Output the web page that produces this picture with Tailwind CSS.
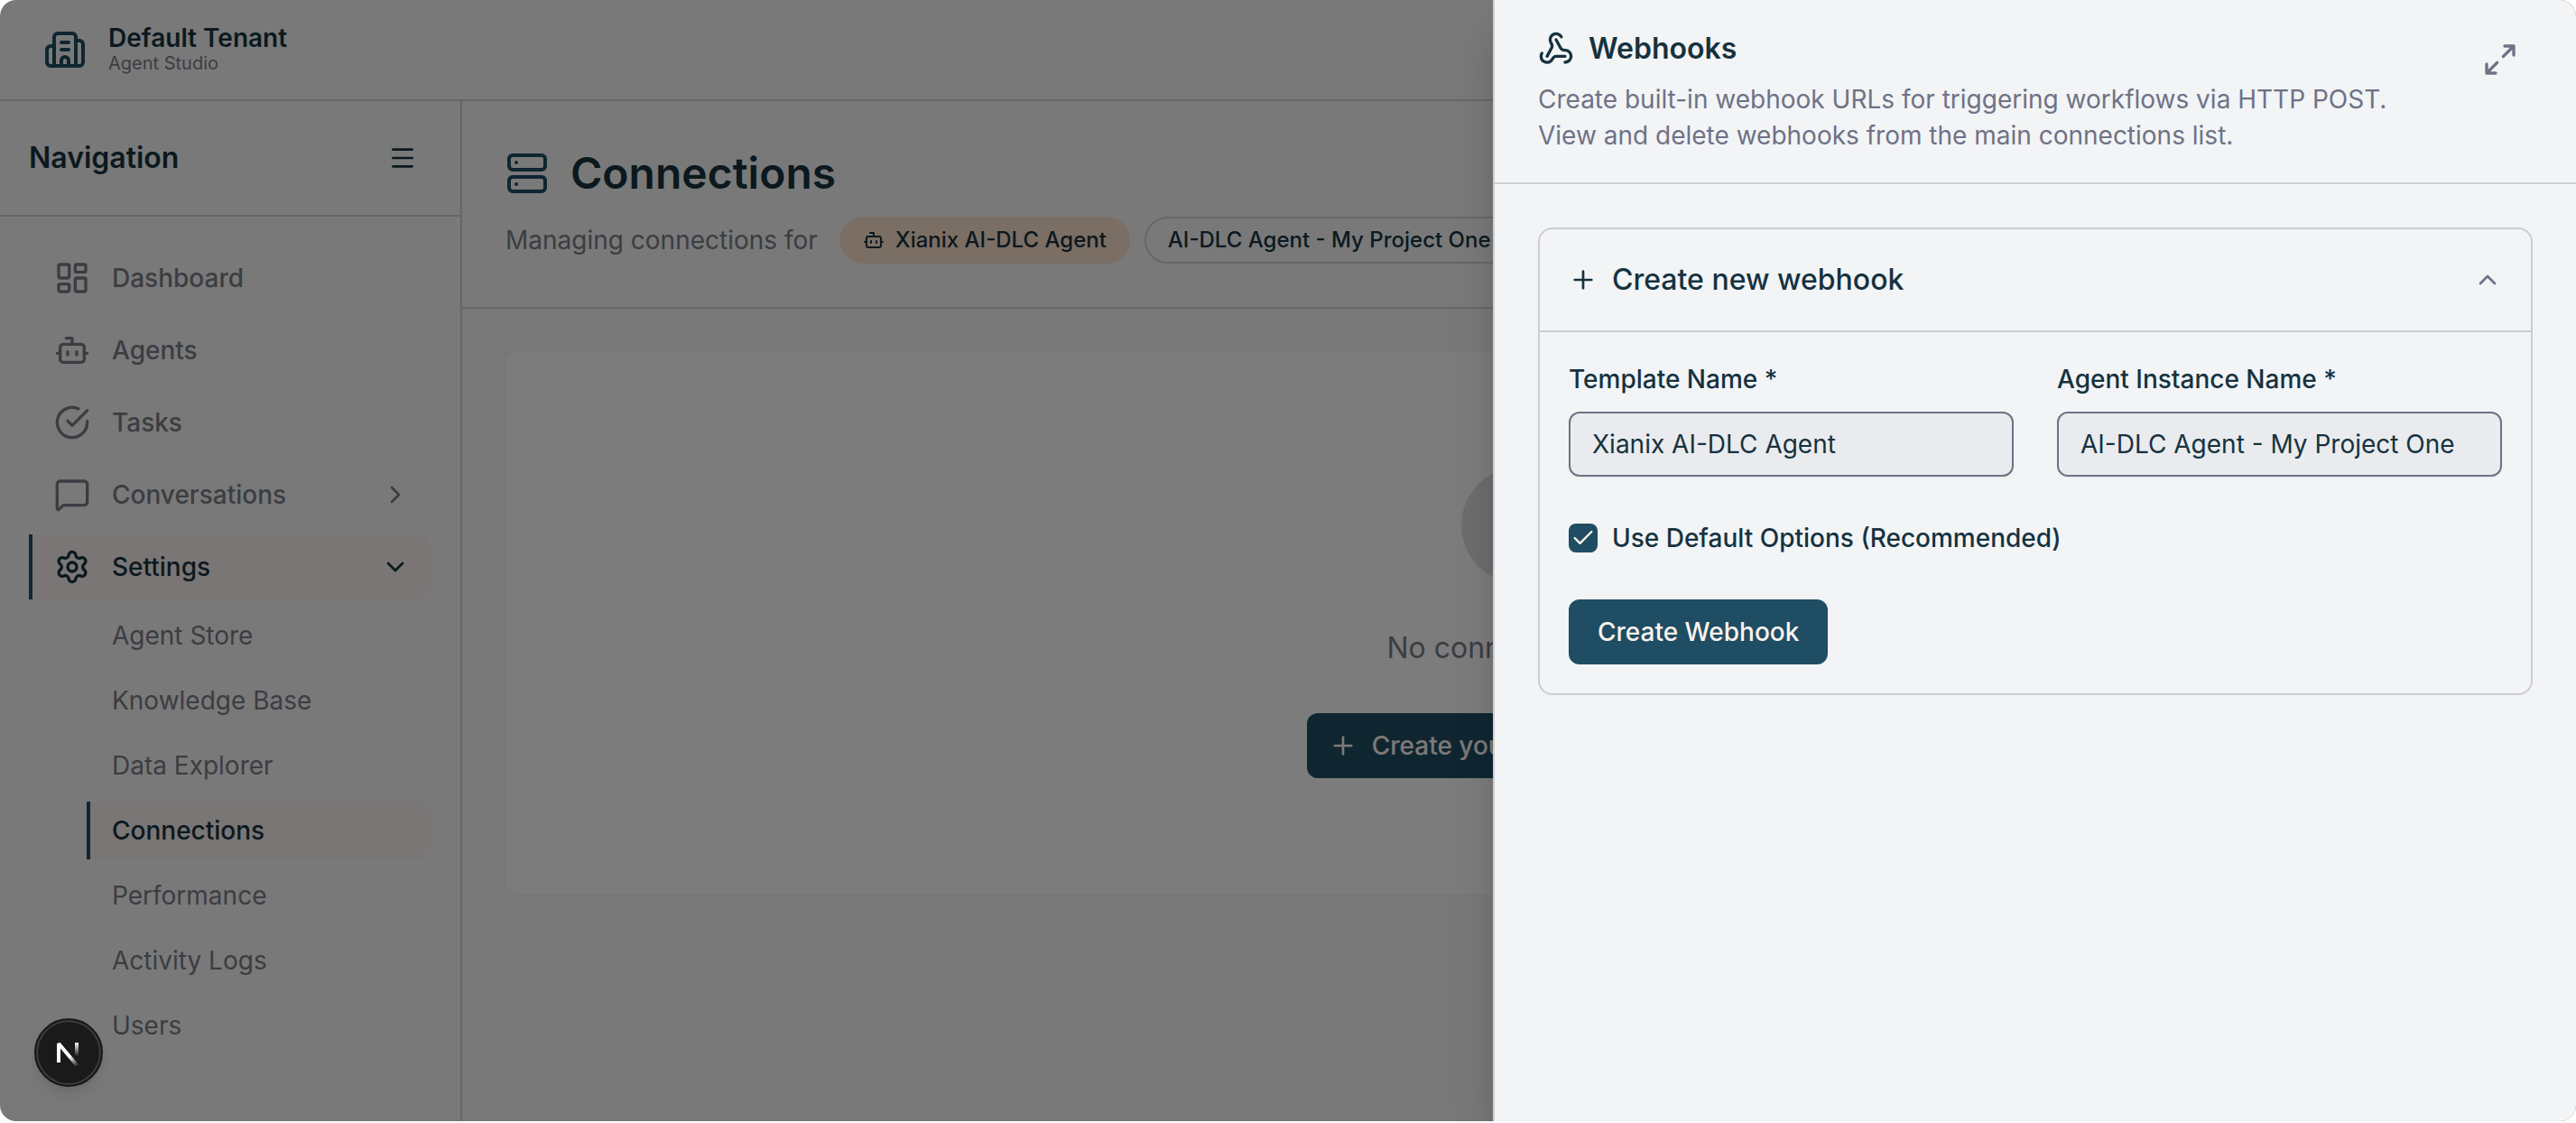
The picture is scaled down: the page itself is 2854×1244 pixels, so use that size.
<!DOCTYPE html>
<html lang="en">
  <head>
    <meta charset="UTF-8" />
    <meta name="viewport" content="width=device-width, initial-scale=1.0" />
    <script src="https://cdn.jsdelivr.net/npm/@tailwindcss/browser@4"></script>
    <title>Connections - Agent Studio</title>
  </head>
  <body class="bg-white font-['Inter',sans-serif] text-[28px] leading-10 text-[#16323f]">
    <!-- shared icons -->
    <svg class="hidden">
      <symbol id="bot" viewBox="0 0 24 24">
        <path d="M12 8V4H8" />
        <rect width="16" height="12" x="4" y="8" rx="2" />
        <path d="M2 14h2M20 14h2M15 13v2M9 13v2" />
      </symbol>
      <symbol id="plus" viewBox="0 0 24 24">
        <path d="M5 12h14M12 5v14" />
      </symbol>
    </svg>

    <div class="h-screen pb-0.5">
      <div class="relative flex h-full flex-col overflow-hidden rounded-[18px] bg-[#f2f2f3]">
        <header class="flex h-28 shrink-0 items-center gap-6 border-b-2 border-[#cccdd0] px-12">
          <svg class="size-12 text-[#1f4d63]" viewBox="0 0 24 24" fill="none" stroke="currentColor" stroke-width="2" stroke-linecap="round" stroke-linejoin="round">
            <path d="M10 12h4M10 8h4M14 21v-3a2 2 0 0 0-4 0v3" />
            <path d="M6 10H4a2 2 0 0 0-2 2v7a2 2 0 0 0 2 2h16a2 2 0 0 0 2-2V9a2 2 0 0 0-2-2h-2" />
            <path d="M6 21V5a2 2 0 0 1 2-2h8a2 2 0 0 1 2 2v16" />
          </svg>
          <div class="pt-0.5">
            <p class="leading-7 font-semibold">Default Tenant</p>
            <p class="text-[20px] leading-7 text-[#787a84]">Agent Studio</p>
          </div>
        </header>

        <div class="flex min-h-0 flex-1">
          <aside class="flex w-128 shrink-0 flex-col border-r-2 border-[#cccdd0]">
            <div class="flex h-32 shrink-0 items-center justify-between border-b-2 border-[#cccdd0] px-8">
              <h2 class="text-[32px] leading-12 font-semibold">Navigation</h2>
              <button type="button" aria-label="Collapse navigation" class="flex size-16 items-center justify-center">
                <svg class="size-8" viewBox="0 0 24 24" fill="none" stroke="currentColor" stroke-width="2" stroke-linecap="round">
                  <path d="M4 5h16M4 12h16M4 19h16" />
                </svg>
              </button>
            </div>

            <nav class="flex flex-col gap-2 p-8 font-medium text-[#787a84]">
              <a href="#" class="flex h-18 items-center gap-6 border-l-4 border-transparent px-6">
                <svg class="size-10" viewBox="0 0 24 24" fill="none" stroke="currentColor" stroke-width="2" stroke-linecap="round" stroke-linejoin="round">
                  <rect width="7" height="9" x="3" y="3" rx="1" />
                  <rect width="7" height="5" x="14" y="3" rx="1" />
                  <rect width="7" height="9" x="14" y="12" rx="1" />
                  <rect width="7" height="5" x="3" y="16" rx="1" />
                </svg>
                Dashboard
              </a>
              <a href="#" class="flex h-18 items-center gap-6 border-l-4 border-transparent px-6">
                <svg class="size-10" fill="none" stroke="currentColor" stroke-width="2" stroke-linecap="round" stroke-linejoin="round"><use href="#bot" /></svg>
                Agents
              </a>
              <a href="#" class="flex h-18 items-center gap-6 border-l-4 border-transparent px-6">
                <svg class="size-10" viewBox="0 0 24 24" fill="none" stroke="currentColor" stroke-width="2" stroke-linecap="round" stroke-linejoin="round">
                  <path d="M22 11.08V12a10 10 0 1 1-5.93-9.14" />
                  <path d="m9 11 3 3L22 4" />
                </svg>
                Tasks
              </a>
              <a href="#" class="flex h-18 items-center gap-6 border-l-4 border-transparent px-6">
                <svg class="size-10" viewBox="0 0 24 24" fill="none" stroke="currentColor" stroke-width="2" stroke-linecap="round" stroke-linejoin="round">
                  <path d="M22 17a2 2 0 0 1-2 2H6.828a2 2 0 0 0-1.414.586l-2.202 2.202A.71.71 0 0 1 2 21.286V5a2 2 0 0 1 2-2h16a2 2 0 0 1 2 2z" />
                </svg>
                Conversations
                <svg class="ml-auto size-8" viewBox="0 0 24 24" fill="none" stroke="currentColor" stroke-width="2" stroke-linecap="round" stroke-linejoin="round">
                  <path d="m9 18 6-6-6-6" />
                </svg>
              </a>
              <a href="#" class="flex h-18 items-center gap-6 rounded-r-2xl border-l-4 border-[#1f4d63] bg-[#f4ecea] px-6 text-[#16323f]">
                <svg class="size-10" viewBox="0 0 24 24" fill="none" stroke="currentColor" stroke-width="2" stroke-linecap="round" stroke-linejoin="round">
                  <path d="M9.671 4.136a2.34 2.34 0 0 1 4.659 0 2.34 2.34 0 0 0 3.319 1.915 2.34 2.34 0 0 1 2.33 4.033 2.34 2.34 0 0 0 0 3.831 2.34 2.34 0 0 1-2.33 4.033 2.34 2.34 0 0 0-3.319 1.915 2.34 2.34 0 0 1-4.659 0 2.34 2.34 0 0 0-3.32-1.915 2.34 2.34 0 0 1-2.33-4.033 2.34 2.34 0 0 0 0-3.831A2.34 2.34 0 0 1 6.35 6.051a2.34 2.34 0 0 0 3.319-1.915" />
                  <circle cx="12" cy="12" r="3" />
                </svg>
                Settings
                <svg class="ml-auto size-8" viewBox="0 0 24 24" fill="none" stroke="currentColor" stroke-width="2" stroke-linecap="round" stroke-linejoin="round">
                  <path d="m6 9 6 6 6-6" />
                </svg>
              </a>
              <div class="ml-16 flex flex-col gap-2 font-normal">
                <a href="#" class="flex h-16 items-center border-l-4 border-transparent px-6">Agent Store</a>
                <a href="#" class="flex h-16 items-center border-l-4 border-transparent px-6">Knowledge Base</a>
                <a href="#" class="flex h-16 items-center border-l-4 border-transparent px-6">Data Explorer</a>
                <a href="#" class="flex h-16 items-center rounded-r-2xl border-l-4 border-[#1f4d63] bg-[#f4ecea] px-6 font-medium text-[#16323f]">Connections</a>
                <a href="#" class="flex h-16 items-center border-l-4 border-transparent px-6">Performance</a>
                <a href="#" class="flex h-16 items-center border-l-4 border-transparent px-6">Activity Logs</a>
                <a href="#" class="flex h-16 items-center border-l-4 border-transparent px-6">Users</a>
              </div>
            </nav>
          </aside>

          <main class="min-w-0 flex-1 bg-[#f0f0f0]">
            <div class="border-b-2 border-[#cccdd0] bg-[#f2f2f3] p-12">
              <div class="flex items-center gap-6">
                <svg class="size-12 text-[#1f4d63]" viewBox="0 0 24 24" fill="none" stroke="currentColor" stroke-width="2" stroke-linecap="round" stroke-linejoin="round">
                  <rect width="20" height="8" x="2" y="2" rx="2" />
                  <rect width="20" height="8" x="2" y="14" rx="2" />
                  <path d="M6 6h.01M6 18h.01" />
                </svg>
                <h1 class="text-[48px] leading-16 font-semibold">Connections</h1>
              </div>
              <div class="mt-4 flex items-center gap-4 whitespace-nowrap">
                <p class="mr-2 text-[#787a84]">Managing connections for</p>
                <span class="flex h-13 items-center gap-3 rounded-full border-2 border-transparent bg-[#f6dcc8] px-6 text-[24px] font-medium">
                  <svg class="size-6" fill="none" stroke="currentColor" stroke-width="2" stroke-linecap="round" stroke-linejoin="round"><use href="#bot" /></svg>
                  Xianix AI-DLC Agent
                </span>
                <span class="flex h-13 items-center rounded-full border-2 border-[#cccdd0] px-6 text-[24px] font-medium">AI-DLC Agent - My Project One</span>
              </div>
            </div>

            <div class="p-12">
              <section class="flex flex-col items-center rounded-2xl bg-[#f8f8f8] py-32">
                <div class="flex size-32 items-center justify-center rounded-full bg-[#dadadf] text-[#787a84]">
                  <svg class="size-16" viewBox="0 0 24 24" fill="none" stroke="currentColor" stroke-width="2" stroke-linecap="round" stroke-linejoin="round">
                    <path d="M9 17H7A5 5 0 0 1 7 7h2M15 7h2a5 5 0 1 1 0 10h-2M8 12h8" />
                  </svg>
                </div>
                <p class="mt-12 text-[32px] leading-12 text-[#787a84]">No connections yet</p>
                <button type="button" class="mt-12 flex h-18 items-center gap-4 rounded-xl bg-[#1f4d63] px-6 font-medium text-[#faf3ee]">
                  <svg class="size-8" fill="none" stroke="currentColor" stroke-width="2" stroke-linecap="round"><use href="#plus" /></svg>
                  Create your first connection
                </button>
              </section>
            </div>
          </main>
        </div>

        <!-- backdrop -->
        <div class="absolute inset-0 bg-black/50"></div>

        <!-- webhook sheet -->
        <div role="dialog" aria-labelledby="sheet-title" class="absolute inset-y-0 right-0 w-full max-w-[1200px] border-l-2 border-[#cccdd0] bg-[#f2f4f6] shadow-2xl">
          <div class="flex justify-between border-b-2 border-[#cccdd0] px-12 py-8">
            <div>
              <h2 id="sheet-title" class="flex items-center gap-4 text-[32px] leading-11 font-semibold">
                <svg class="size-10" viewBox="0 0 24 24" fill="none" stroke="currentColor" stroke-width="2" stroke-linecap="round" stroke-linejoin="round">
                  <path d="M18 16.98h-5.99c-1.1 0-1.95.94-2.48 1.9A4 4 0 0 1 2 17c.01-.7.2-1.4.57-2" />
                  <path d="m6 17 3.13-5.78c.53-.97.1-2.18-.5-3.1a4 4 0 1 1 6.89-4.06" />
                  <path d="m12 6 3.13 5.73C15.66 12.7 16.9 13 18 13a4 4 0 0 1 0 8" />
                </svg>
                Webhooks
              </h2>
              <p class="mt-3.5 text-[#6f7285]">
                Create built-in webhook URLs for triggering workflows via HTTP POST.<br />
                View and delete webhooks from the main connections list.
              </p>
            </div>
            <button type="button" aria-label="Expand" class="flex h-17 w-18 shrink-0 items-center justify-center text-[#6f7285]">
              <svg class="size-10" viewBox="0 0 24 24" fill="none" stroke="currentColor" stroke-width="2" stroke-linecap="round" stroke-linejoin="round">
                <path d="M15 3h6v6M21 3l-7 7M3 21l7-7M9 21H3v-6" />
              </svg>
            </button>
          </div>

          <div class="p-12">
            <div class="rounded-2xl border-2 border-[#cccdd0]">
              <button type="button" aria-expanded="true" class="flex h-28 w-full items-center gap-4 px-8 text-[32px] font-medium">
                <svg class="size-8" fill="none" stroke="currentColor" stroke-width="2" stroke-linecap="round"><use href="#plus" /></svg>
                Create new webhook
                <svg class="ml-auto size-8 text-[#6f7285]" viewBox="0 0 24 24" fill="none" stroke="currentColor" stroke-width="2" stroke-linecap="round" stroke-linejoin="round">
                  <path d="m18 15-6-6-6 6" />
                </svg>
              </button>
              <form class="flex flex-col items-start gap-12 border-t-2 border-[#cccdd0] p-8">
                <div class="grid w-full grid-cols-2 gap-12">
                  <div class="flex flex-col gap-4">
                    <label for="template" class="font-medium">Template Name *</label>
                    <input id="template" type="text" value="Xianix AI-DLC Agent" class="h-18 w-full rounded-xl border-2 border-[#6f7285] bg-[#e9ebee] px-6 shadow-xs" />
                  </div>
                  <div class="flex flex-col gap-4">
                    <label for="instance" class="font-medium">Agent Instance Name *</label>
                    <input id="instance" type="text" value="AI-DLC Agent - My Project One" class="h-18 w-full rounded-xl border-2 border-[#6f7285] bg-[#e9ebee] px-6 shadow-xs" />
                  </div>
                </div>
                <div class="flex items-center gap-4">
                  <div class="grid size-8 place-items-center">
                    <input id="defaults" type="checkbox" checked class="col-start-1 row-start-1 size-8 appearance-none rounded-lg bg-[#1f4d63]" />
                    <svg class="pointer-events-none col-start-1 row-start-1 size-7 text-[#faf3ee]" viewBox="0 0 24 24" fill="none" stroke="currentColor" stroke-width="2" stroke-linecap="round" stroke-linejoin="round">
                      <path d="M20 6 9 17l-5-5" />
                    </svg>
                  </div>
                  <label for="defaults" class="font-medium">Use Default Options (Recommended)</label>
                </div>
                <button type="submit" class="h-18 rounded-xl bg-[#1f4d63] px-8 font-medium text-[#faf3ee]">Create Webhook</button>
              </form>
            </div>
          </div>
        </div>

        <!-- dev tools badge -->
        <button type="button" aria-label="Open dev tools" class="absolute bottom-[38px] left-[38px] flex size-19 items-center justify-center rounded-full border-2 border-[#171717] bg-[#1a1a1a] shadow-lg inset-ring-2 inset-ring-[#3d3d3d]">
          <svg class="size-8" viewBox="0 0 32 32" fill="none" stroke-width="4">
            <defs>
              <linearGradient id="fade-diagonal" x1="18" y1="20" x2="26" y2="31" gradientUnits="userSpaceOnUse">
                <stop stop-color="#fff" />
                <stop offset="1" stop-color="#fff" stop-opacity="0" />
              </linearGradient>
              <linearGradient id="fade-stem" x1="25" y1="5" x2="25" y2="20" gradientUnits="userSpaceOnUse">
                <stop stop-color="#fff" />
                <stop offset="1" stop-color="#fff" stop-opacity="0" />
              </linearGradient>
            </defs>
            <path d="M5 27V6l21 25" stroke="url(#fade-diagonal)" stroke-linejoin="bevel" />
            <path d="M25 5v16" stroke="url(#fade-stem)" />
          </svg>
        </button>
      </div>
    </div>
  </body>
</html>
